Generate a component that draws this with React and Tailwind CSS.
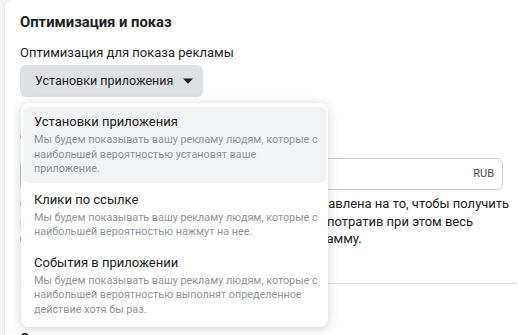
import React from 'react';

const options = [
  {
    title: 'Установки приложения',
    text: 'Мы будем показывать вашу рекламу людям, которые с наибольшей вероятностью установят ваше приложение.',
  },
  {
    title: 'Клики по ссылке',
    text: 'Мы будем показывать вашу рекламу людям, которые с наибольшей вероятностью нажмут на нее.',
  },
  {
    title: 'События в приложении',
    text: 'Мы будем показывать вашу рекламу людям, которые с наибольшей вероятностью выполнят определенное действие хотя бы раз.',
  },
];

const Caret = () => (
  <svg width="10" height="6" viewBox="0 0 10 6" className="shrink-0">
    <path d="M0 0.5h10L5 5.8z" fill="#1c1e21" />
  </svg>
);

export default function App() {
  const selected = 0;

  return (
    <div className="h-[335px] overflow-hidden bg-[#f5f6f7] pl-[5px] font-[Roboto,'Liberation_Sans',sans-serif] text-[#1c1e21]">
      <div className="relative h-[400px] rounded-l-lg bg-white px-[15px] pt-[12px] shadow-[0_0_3px_rgba(0,0,0,0.1)]">
        {/* Section title */}
        <h2 className="text-[14.8px] font-bold leading-[20px]">Оптимизация и показ</h2>

        <div className="mt-[11px] text-[13px] leading-[20px]">Оптимизация для показа рекламы</div>

        {/* Select + open menu */}
        <div className="relative z-10 mt-[2px] w-fit">
          <button className="flex h-[32px] items-center gap-[10px] rounded-md bg-[#dfe0e3] pl-[15px] pr-[10px] text-[12.5px] text-[#1c1e21]">
            Установки приложения
            <Caret />
          </button>

          <div className="absolute left-[1px] top-[38px] w-[307px] rounded-lg bg-white px-[2px] py-[4px] shadow-[0_2px_12px_rgba(0,0,0,0.18)]">
            <div className="flex flex-col gap-[2px]">
              {options.map((o, i) => (
                <div
                  key={o.title}
                  className={`rounded-md pb-[6px] pl-[11px] pr-[6px] pt-[6px] ${i === selected ? 'bg-[#f2f3f5]' : ''}`}
                >
                  <div className="text-[13px] leading-[18px] text-[#1c1e21]">{o.title}</div>
                  <p className="mt-[2px] text-[10.8px] leading-[14.5px] text-[#90949c]">{o.text}</p>
                </div>
              ))}
            </div>
          </div>
        </div>

        {/* Bid amount (behind the menu) */}
        <div className="mt-[30px] text-[13px] leading-[20px]">Стоимость за результат</div>
        <div className="mt-[11px] flex h-[32px] items-center justify-end rounded-md border border-[#ccd0d5] pr-[8px] text-[11px] text-[#444950]">
          RUB
        </div>
        <p className="mt-[5px] whitespace-nowrap text-[13px] leading-[17.5px] text-[#1c1e21]">
          Стратегия ставок с наименьшей ценой будет направлена на то, чтобы получить
          <br />
          наибольшее возможное количество результатов, потратив при этом весь
          <br />
          бюджет, выделенный на всю эту медийную программу.
        </p>

        <div className="-mr-[14px] mt-[35px] border-t border-[#dddfe2]" />

        <h3 className="mt-[45px] text-[14px] font-bold leading-[20px]">Стратегия ставок</h3>
      </div>
    </div>
  );
}
